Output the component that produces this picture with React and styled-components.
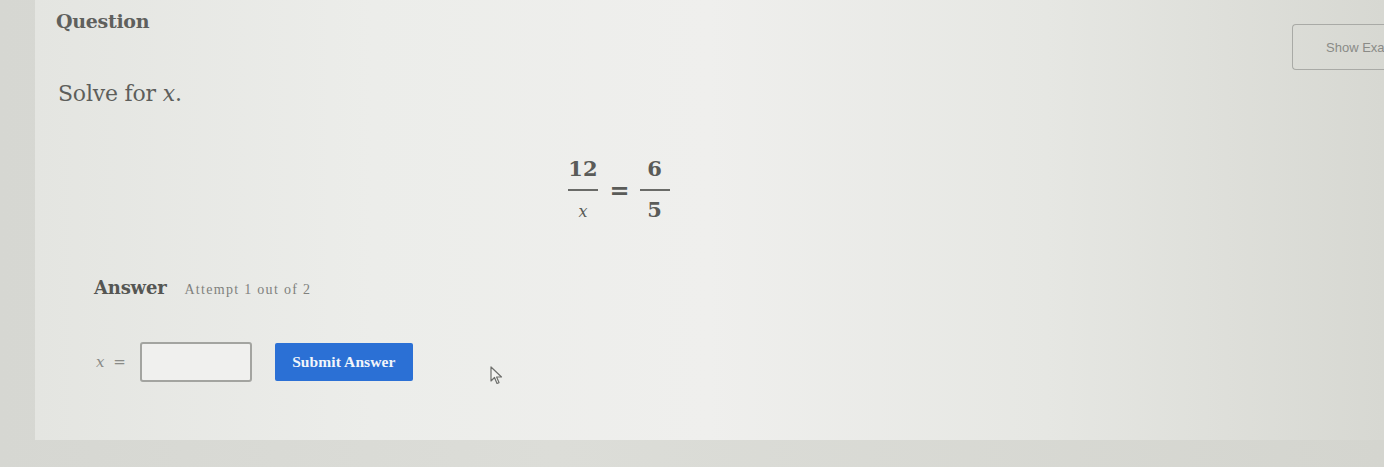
import { createGlobalStyle, styled } from 'styled-components'

const GlobalStyle = createGlobalStyle`
	html, body {
		margin: 0;
		padding: 0;
	}
	body {
		width: 1384px;
		height: 467px;
		overflow: hidden;
		background: linear-gradient(90deg, #d6d7d2 0%, #dcddd8 40%, #d4d5cf 100%);
		font-family: 'DejaVu Serif', 'Liberation Serif', serif;
	}
`

const Page = styled.div`
	display: flex;
	height: 467px;
	padding: 0 0 27px 35px;
	box-sizing: border-box;
`

const Card = styled.main`
	position: relative;
	flex: 1;
	display: flex;
	flex-direction: column;
	padding: 10px 0 0 21px;
	background: linear-gradient(90deg, #e4e5e1 0%, #ecedea 25%, #efefed 50%, #e6e7e3 75%, #d7d8d2 100%);
`

const Header = styled.div`
	display: flex;
	justify-content: space-between;
	align-items: flex-start;
`

const Title = styled.h2`
	margin: 0;
	font-size: 19px;
	font-weight: bold;
	color: #5f605d;
	letter-spacing: -0.3px;
`

const ExampleButton = styled.button`
	margin-top: 14px;
	width: 92px;
	height: 46px;
	padding: 0 0 0 33px;
	text-align: left;
	white-space: nowrap;
	overflow: hidden;
	background: transparent;
	border: 1.5px solid #a9aaa6;
	border-right: none;
	border-radius: 4px 0 0 4px;
	font-family: 'Liberation Sans', Arial, sans-serif;
	font-size: 13px;
	color: #8a8b87;
`

const Prompt = styled.p`
	margin: 11px 0 0 2px;
	font-size: 22px;
	color: #5d5e5b;
	letter-spacing: -0.2px;
`

const Var = styled.i`
	font-family: 'DejaVu Serif', serif;
	font-style: italic;
`

const Equation = styled.div`
	display: flex;
	align-items: center;
	justify-content: center;
	gap: 10px;
	margin: 52px 0 0 0;
	padding-right: 204px;
	color: #5a5b58;
	font-size: 21px;
`

const Fraction = styled.span`
	display: inline-flex;
	flex-direction: column;
	align-items: center;
	line-height: 1.05;
	font-weight: bold;
	span + span {
		border-top: 2px solid #6a6b68;
		padding: 8px 4px 0;
		min-width: 22px;
		text-align: center;
	}
	span:first-child {
		padding: 0 2px 9px;
	}
`

const Small = styled.span`
	font-size: ${({ $size }) => $size || '18px'};
	font-weight: ${({ $bold }) => ($bold ? 'bold' : 'normal')};
`

const Equals = styled.span`
	font-size: 24px;
	font-weight: bold;
	margin-top: 2px;
`

const AnswerHead = styled.div`
	display: flex;
	align-items: baseline;
	gap: 18px;
	margin: 56px 0 0 38px;
`

const AnswerTitle = styled.span`
	font-size: 18px;
	font-weight: bold;
	color: #555653;
	letter-spacing: -0.2px;
`

const Attempt = styled.span`
	font-family: 'Liberation Serif', serif;
	font-size: 14px;
	letter-spacing: 1.3px;
	color: #80817d;
`

const InputRow = styled.div`
	display: flex;
	align-items: center;
	margin: 44px 0 0 40px;
`

const Label = styled.span`
	font-size: 15px;
	color: #8a8b87;
	margin-right: 12px;
	letter-spacing: 2px;
`

const Field = styled.input`
	width: 112px;
	height: 40px;
	box-sizing: border-box;
	border: 2px solid #a3a4a0;
	border-radius: 3px;
	background: #f0f0ee;
	margin-right: 23px;
`

const Submit = styled.button`
	width: 138px;
	height: 38px;
	border: none;
	border-radius: 2px;
	background: #2b70d5;
	color: #f1f5fb;
	font-family: 'Liberation Serif', serif;
	font-weight: bold;
	font-size: 15.5px;
	letter-spacing: 0.1px;
`

const Pointer = styled.svg`
	position: absolute;
	left: 455px;
	top: 366px;
`

export default function App() {
	return (
		<>
			<GlobalStyle />
			<Page>
				<Card>
					<Header>
						<Title>Question</Title>
						<ExampleButton>Show Examples</ExampleButton>
					</Header>
					<Prompt>
						Solve for <Var>x</Var>.
					</Prompt>
					<Equation>
						<Fraction>
							<span>12</span>
							<span>
								<Small $size="16px">
									<Var>x</Var>
								</Small>
							</span>
						</Fraction>
						<Equals>=</Equals>
						<Fraction>
							<span>6</span>
							<span>5</span>
						</Fraction>
					</Equation>
					<AnswerHead>
						<AnswerTitle>Answer</AnswerTitle>
						<Attempt>Attempt 1 out of 2</Attempt>
					</AnswerHead>
					<InputRow>
						<Label>
							<Var>x</Var> =
						</Label>
						<Field />
						<Submit>Submit Answer</Submit>
					</InputRow>
					<Pointer width="14" height="20" viewBox="0 0 14 20">
						<path d="M1 1 L1 15 L4.5 11.5 L7 17.5 L9 16.6 L6.6 11 L11.5 11 Z" fill="#f4f4f2" stroke="#6e6f6c" strokeWidth="1.2" strokeLinejoin="round" />
					</Pointer>
				</Card>
			</Page>
		</>
	)
}
